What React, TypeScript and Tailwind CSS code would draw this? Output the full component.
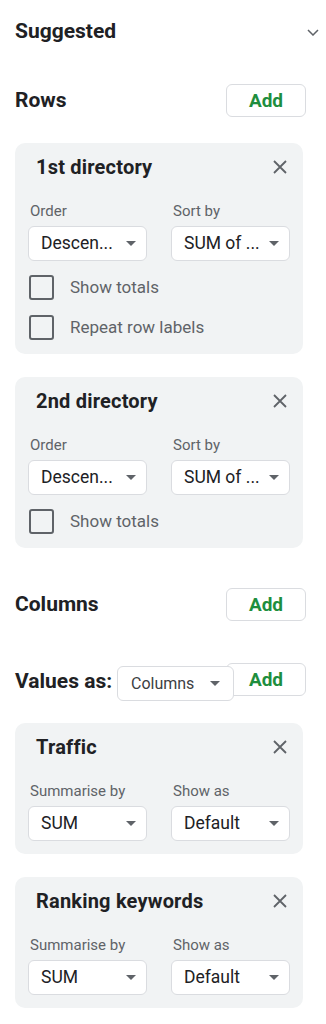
import React from "react";

const font = { fontFamily: "Roboto, 'Noto Sans', Arial, sans-serif" };

function CloseIcon() {
  return (
    <svg width="14" height="14" viewBox="0 0 14 14" className="shrink-0">
      <path d="M1 1L13 13M13 1L1 13" stroke="#5f6368" strokeWidth="1.8" fill="none" />
    </svg>
  );
}

function Caret() {
  return (
    <svg width="10" height="5" viewBox="0 0 10 5" className="shrink-0">
      <path d="M0 0H10L5 5Z" fill="#5f6368" />
    </svg>
  );
}

function AddButton() {
  return (
    <button className="w-[80px] h-[33px] shrink-0 rounded-[6px] border border-[#dadce0] bg-white text-[19px] font-bold text-[#1e8e3e] leading-none">
      Add
    </button>
  );
}

function Select({ value }: { value: string }) {
  return (
    <div className="flex h-[35px] w-[119px] items-center justify-between rounded-[6px] border border-[#dadce0] bg-white pl-[12px] pr-[10px]">
      <span className="text-[17.5px] text-[#202124] whitespace-nowrap">{value}</span>
      <Caret />
    </div>
  );
}

function Checkbox({ label }: { label: string }) {
  return (
    <div className="flex h-[25px] items-center gap-[16px] pl-[1px]">
      <div className="h-[25px] w-[25px] rounded-[3px] border-2 border-[#5f6368]" />
      <span className="text-[17px] text-[#5f6368]">{label}</span>
    </div>
  );
}

interface CardProps {
  title: string;
  left: [string, string];
  right: [string, string];
  checks?: string[];
}

function Card({ title, left, right, checks = [] }: CardProps) {
  return (
    <div className={`w-[288px] rounded-[10px] bg-[#f1f3f4] px-[13px] pt-[12px] ${checks.length ? "pb-[14px]" : "pb-[13px]"}`}>
      <div className="flex h-[24px] items-center justify-between pl-[8px] pr-[3px]">
        <span className="text-[20px] tracking-[0.2px] font-bold text-[#202124]">{title}</span>
        <CloseIcon />
      </div>
      <div className="mt-[22px] flex gap-[24px]">
        <div className="flex flex-col gap-[5px]">
          <span className="h-[20px] pl-[2px] text-[15px] leading-[20px] text-[#5f6368]">{left[0]}</span>
          <Select value={left[1]} />
        </div>
        <div className="flex flex-col gap-[5px]">
          <span className="h-[20px] pl-[2px] text-[15px] leading-[20px] text-[#5f6368]">{right[0]}</span>
          <Select value={right[1]} />
        </div>
      </div>
      {checks.length > 0 && (
        <div className="mt-[14px] flex flex-col gap-[15px]">
          {checks.map((c) => (
            <Checkbox key={c} label={c} />
          ))}
        </div>
      )}
    </div>
  );
}

export default function App() {
  return (
    <div className="min-h-[1024px] w-[326px] bg-white pl-[15px]" style={font}>
      <div className="flex h-[64px] w-[304px] items-center justify-between">
        <span className="text-[21px] font-bold text-[#202124]">Suggested</span>
        <svg width="12" height="7" viewBox="0 0 12 7">
          <path d="M1 1L6 6L11 1" stroke="#5f6368" strokeWidth="1.5" fill="none" />
        </svg>
      </div>

      <div className="mt-[20px] flex h-[33px] w-[291px] items-center justify-between">
        <span className="text-[21px] font-bold text-[#202124]">Rows</span>
        <AddButton />
      </div>

      <div className="mt-[26px] flex flex-col gap-[23px]">
        <Card
          title="1st directory"
          left={["Order", "Descen..."]}
          right={["Sort by", "SUM of ..."]}
          checks={["Show totals", "Repeat row labels"]}
        />
        <Card
          title="2nd directory"
          left={["Order", "Descen..."]}
          right={["Sort by", "SUM of ..."]}
          checks={["Show totals"]}
        />
      </div>

      <div className="mt-[40px] flex h-[33px] w-[291px] items-center justify-between">
        <span className="text-[21px] font-bold text-[#202124]">Columns</span>
        <AddButton />
      </div>

      <div className="mt-[42px] flex h-[38px] w-[291px] items-center">
        <span className="w-[102px] shrink-0 text-[21px] font-bold text-[#202124]">Values as:</span>
        <div className="relative z-10 mr-[-8px] flex h-[35px] w-[117px] shrink-0 items-center justify-between self-end rounded-[6px] border border-[#dadce0] bg-white pl-[13px] pr-[13px]">
          <span className="text-[16px] text-[#3c4043]">Columns</span>
          <Caret />
        </div>
        <div className="ml-auto self-start">
          <AddButton />
        </div>
      </div>

      <div className="mt-[22px] flex flex-col gap-[23px] pb-[15px]">
        <Card title="Traffic" left={["Summarise by", "SUM"]} right={["Show as", "Default"]} />
        <Card title="Ranking keywords" left={["Summarise by", "SUM"]} right={["Show as", "Default"]} />
      </div>
    </div>
  );
}
